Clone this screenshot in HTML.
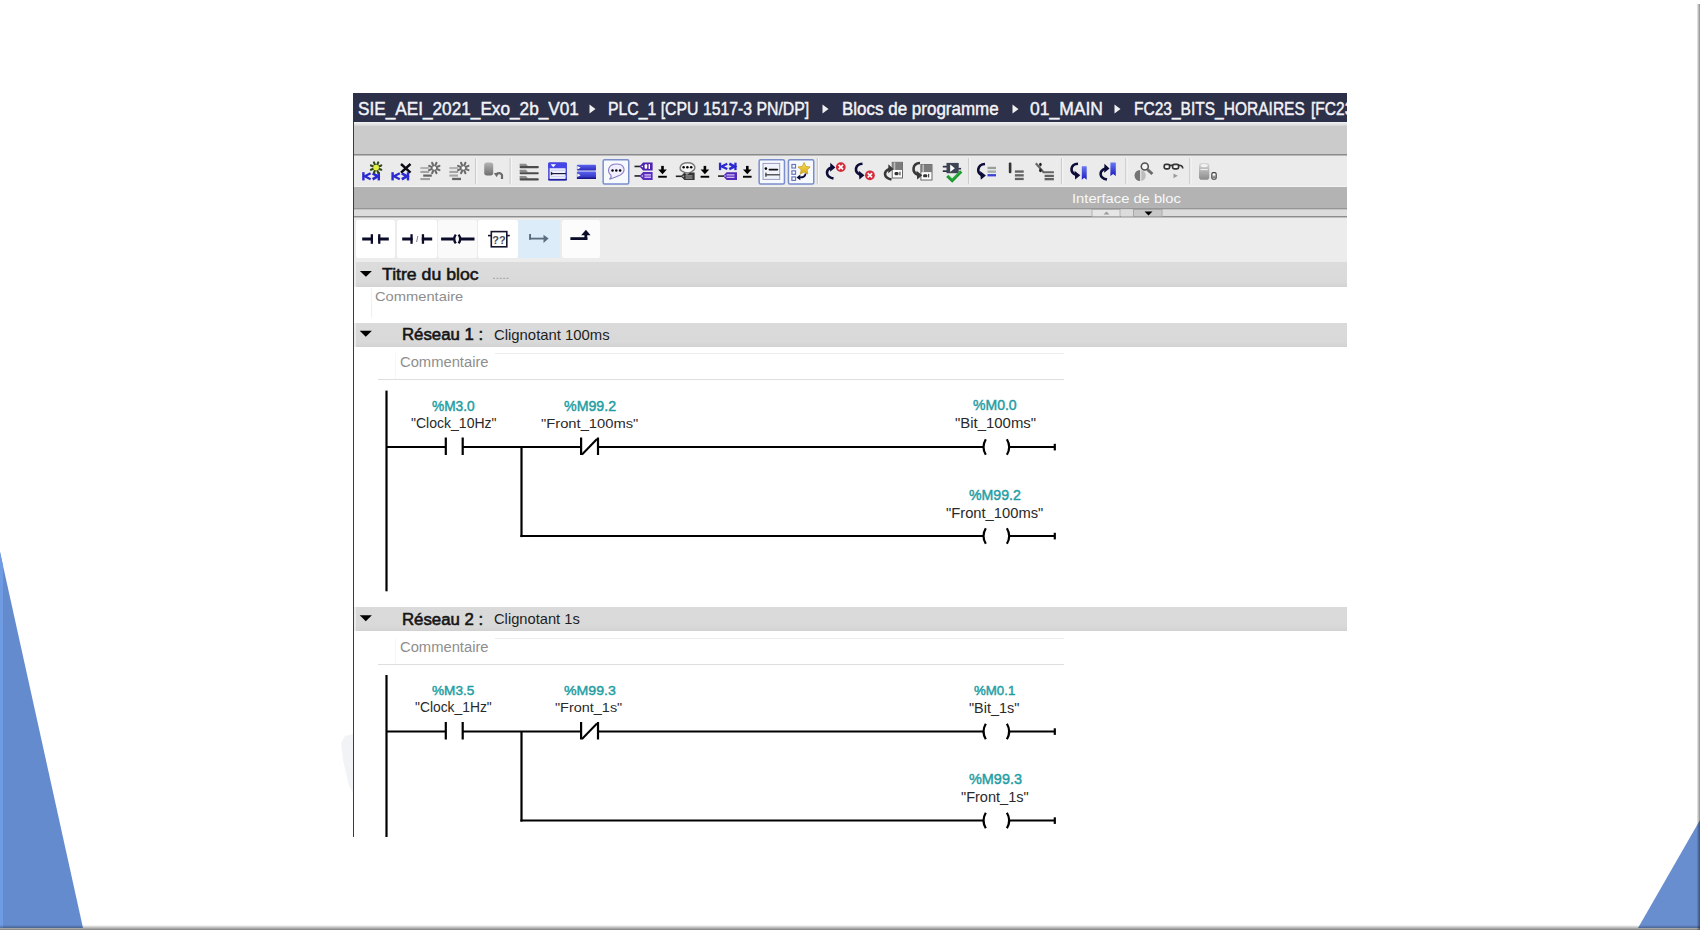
<!DOCTYPE html>
<html><head><meta charset="utf-8"><style>
html,body{margin:0;padding:0;width:1700px;height:930px;overflow:hidden;background:#fff;}
.abs{position:absolute;}
.t{position:absolute;white-space:nowrap;line-height:1;transform-origin:0 0;font-family:"Liberation Sans",sans-serif;}
</style></head><body>
<svg class="abs" style="left:0;top:0" width="1700" height="930" viewBox="0 0 1700 930">
<polygon points="0,552 83,928 0,928" fill="#648bce"/>
<polygon points="0,552 3,565.6 3,928 0,928" fill="#6f9be2"/>
<polygon points="1700,820 1638,928 1700,928" fill="#688ed0"/>
<defs>
<linearGradient id="rs" x1="0" x2="1" y1="0" y2="0"><stop offset="0" stop-color="#000" stop-opacity="0"/><stop offset="1" stop-color="#000" stop-opacity="0.45"/></linearGradient>
<linearGradient id="bs" x1="0" x2="0" y1="0" y2="1"><stop offset="0" stop-color="#000" stop-opacity="0"/><stop offset="1" stop-color="#000" stop-opacity="0.5"/></linearGradient>
</defs>
<rect x="1696.5" y="4" width="3.5" height="926" fill="url(#rs)"/>
<rect x="0" y="925" width="1700" height="5" fill="url(#bs)"/>
</svg>
<div class="abs" style="left:353px;top:93px;width:994px;height:29px;background:#2c3049;"></div>
<div class="abs" style="left:353px;top:122px;width:994px;height:4px;background:linear-gradient(#f4f4f4,#d4d4d4);"></div>
<div class="abs" style="left:353px;top:126px;width:994px;height:28px;background:#cbcbcb;"></div>
<div class="abs" style="left:353px;top:154px;width:994px;height:1px;background:#8a8a8a;"></div>
<div class="abs" style="left:353px;top:155px;width:994px;height:1px;background:#b8b8b8;"></div>
<div class="abs" style="left:353px;top:156px;width:994px;height:30px;background:#ebebeb;"></div>
<div class="abs" style="left:353px;top:186px;width:994px;height:1px;background:#f3f3f3;"></div>
<div class="abs" style="left:353px;top:187px;width:994px;height:21px;background:#b3b3b3;"></div>
<div class="abs" style="left:353px;top:208px;width:994px;height:1px;background:#959595;"></div>
<div class="abs" style="left:353px;top:209px;width:994px;height:1px;background:#c4c4c4;"></div>
<div class="abs" style="left:353px;top:210px;width:994px;height:6px;background:#dcdcdc;"></div>
<div class="abs" style="left:353px;top:216px;width:994px;height:1px;background:#8d8d8d;"></div>
<div class="abs" style="left:353px;top:217px;width:994px;height:1px;background:#c0c0c0;"></div>
<div class="abs" style="left:353px;top:218px;width:994px;height:44px;background:#ececec;"></div>
<div class="abs" style="left:353px;top:262px;width:994px;height:25px;background:linear-gradient(#dcdcdc,#dadada 80%,#d3d3d3);"></div>
<div class="abs" style="left:353px;top:322.5px;width:994px;height:24px;background:linear-gradient(#dadada,#d9d9d9 80%,#d2d2d2);"></div>
<div class="abs" style="left:353px;top:607px;width:994px;height:24px;background:linear-gradient(#dadada,#d9d9d9 80%,#d2d2d2);"></div>
<div class="abs" style="left:354.3px;top:262px;width:1.8px;height:25px;background:#ebebeb;"></div>
<div class="abs" style="left:354.3px;top:322.5px;width:1.8px;height:24px;background:#ebebeb;"></div>
<div class="abs" style="left:354.3px;top:607px;width:1.8px;height:24px;background:#ebebeb;"></div>
<div class="abs" style="left:353px;top:122px;width:1.3px;height:715px;background:#3c3c3c;"></div>
<div class="abs" style="left:353px;top:93px;width:994px;height:29px;overflow:hidden">
<div class="abs" style="left:-353px;top:-93px;width:1700px;height:200px">
<div class="t" style="left:358.00px;top:100.00px;font-size:18.60px;color:#f4f4f8;font-weight:400;transform:scaleX(0.9248);-webkit-text-stroke:0.45px #f4f4f8;">SIE_AEI_2021_Exo_2b_V01</div>
<div class="t" style="left:608.40px;top:100.00px;font-size:18.60px;color:#f4f4f8;font-weight:400;transform:scaleX(0.8501);-webkit-text-stroke:0.45px #f4f4f8;">PLC_1 [CPU 1517-3 PN/DP]</div>
<div class="t" style="left:841.90px;top:100.00px;font-size:18.60px;color:#f4f4f8;font-weight:400;transform:scaleX(0.9133);-webkit-text-stroke:0.45px #f4f4f8;">Blocs de programme</div>
<div class="t" style="left:1030.00px;top:100.00px;font-size:18.60px;color:#f4f4f8;font-weight:400;transform:scaleX(0.9415);-webkit-text-stroke:0.45px #f4f4f8;">01_MAIN</div>
<div class="t" style="left:1133.60px;top:100.00px;font-size:18.60px;color:#f4f4f8;font-weight:400;transform:scaleX(0.8349);-webkit-text-stroke:0.45px #f4f4f8;">FC23_BITS_HORAIRES</div>
<div class="t" style="left:1311.00px;top:100.00px;font-size:18.60px;color:#f4f4f8;font-weight:400;transform:scaleX(0.8349);-webkit-text-stroke:0.45px #f4f4f8;">[FC23]</div>
</div></div>
<svg class="abs" style="left:589px;top:102px" width="8" height="14"><polygon points="0.5,2.5 6.5,7 0.5,11.5" fill="#f0f0f0"/></svg>
<svg class="abs" style="left:822px;top:102px" width="8" height="14"><polygon points="0.5,2.5 6.5,7 0.5,11.5" fill="#f0f0f0"/></svg>
<svg class="abs" style="left:1012px;top:102px" width="8" height="14"><polygon points="0.5,2.5 6.5,7 0.5,11.5" fill="#f0f0f0"/></svg>
<svg class="abs" style="left:1114px;top:102px" width="8" height="14"><polygon points="0.5,2.5 6.5,7 0.5,11.5" fill="#f0f0f0"/></svg>
<div class="t" style="left:1072.00px;top:192.00px;font-size:13.66px;color:#f8f8f8;font-weight:400;transform:scaleX(1.0788);">Interface de bloc</div>
<div class="t" style="left:382.40px;top:267.00px;font-size:16.72px;color:#151515;font-weight:400;transform:scaleX(1.0575);-webkit-text-stroke:0.55px #151515;">Titre du bloc</div>
<div class="t" style="left:375.30px;top:290.00px;font-size:13.37px;color:#8e8e8e;font-weight:400;transform:scaleX(1.1001);">Commentaire</div>
<div class="t" style="left:401.50px;top:327.00px;font-size:16.86px;color:#151515;font-weight:400;transform:scaleX(0.9955);-webkit-text-stroke:0.6px #151515;">Réseau 1 :</div>
<div class="t" style="left:494.20px;top:328.00px;font-size:14.54px;color:#1e1e1e;font-weight:400;transform:scaleX(1.0228);">Clignotant 100ms</div>
<div class="t" style="left:399.50px;top:356.00px;font-size:13.81px;color:#8e8e8e;font-weight:400;transform:scaleX(1.0690);">Commentaire</div>
<div class="abs" style="left:378px;top:379px;width:686px;height:1.2px;background:#dedede;"></div>
<div class="abs" style="left:495px;top:353px;width:569px;height:1px;background:#ececec;"></div>
<div class="abs" style="left:395px;top:353px;width:1px;height:26px;background:#f7f7f7;"></div>
<div class="abs" style="left:378px;top:663.5px;width:686px;height:1.2px;background:#dedede;"></div>
<div class="abs" style="left:495px;top:637.5px;width:569px;height:1px;background:#ececec;"></div>
<div class="abs" style="left:395px;top:637.5px;width:1px;height:26px;background:#f7f7f7;"></div>
<div class="abs" style="left:371px;top:288px;width:1px;height:30px;background:#f0f0f0;"></div>
<div class="t" style="left:401.50px;top:612.00px;font-size:16.86px;color:#151515;font-weight:400;transform:scaleX(0.9955);-webkit-text-stroke:0.6px #151515;">Réseau 2 :</div>
<div class="t" style="left:494.20px;top:612.00px;font-size:14.54px;color:#1e1e1e;font-weight:400;transform:scaleX(1.0112);">Clignotant 1s</div>
<div class="t" style="left:399.50px;top:641.00px;font-size:13.81px;color:#8e8e8e;font-weight:400;transform:scaleX(1.0690);">Commentaire</div>
<div class="t" style="left:432.00px;top:399.00px;font-size:14.54px;color:#1f9ea3;font-weight:400;transform:scaleX(0.9438);-webkit-text-stroke:0.45px #1f9ea3;">%M3.0</div>
<div class="t" style="left:410.90px;top:416.00px;font-size:14.97px;color:#2a2a2a;font-weight:400;transform:scaleX(0.9369);">"Clock_10Hz"</div>
<div class="t" style="left:563.50px;top:399.00px;font-size:14.10px;color:#1f9ea3;font-weight:400;transform:scaleX(1.0076);-webkit-text-stroke:0.45px #1f9ea3;">%M99.2</div>
<div class="t" style="left:540.50px;top:417.00px;font-size:13.66px;color:#2a2a2a;font-weight:400;transform:scaleX(1.0797);">"Front_100ms"</div>
<div class="t" style="left:972.50px;top:399.00px;font-size:13.95px;color:#1f9ea3;font-weight:400;transform:scaleX(1.0062);-webkit-text-stroke:0.45px #1f9ea3;">%M0.0</div>
<div class="t" style="left:954.50px;top:416.00px;font-size:14.83px;color:#2a2a2a;font-weight:400;transform:scaleX(1.0065);">"Bit_100ms"</div>
<div class="t" style="left:969.30px;top:488.00px;font-size:14.83px;color:#1f9ea3;font-weight:400;transform:scaleX(0.9545);-webkit-text-stroke:0.45px #1f9ea3;">%M99.2</div>
<div class="t" style="left:946.40px;top:506.00px;font-size:14.97px;color:#2a2a2a;font-weight:400;transform:scaleX(0.9843);">"Front_100ms"</div>
<div class="t" style="left:432.40px;top:684.00px;font-size:13.23px;color:#1f9ea3;font-weight:400;transform:scaleX(1.0275);-webkit-text-stroke:0.45px #1f9ea3;">%M3.5</div>
<div class="t" style="left:414.70px;top:701.00px;font-size:13.81px;color:#2a2a2a;font-weight:400;transform:scaleX(1.0030);">"Clock_1Hz"</div>
<div class="t" style="left:563.50px;top:684.00px;font-size:13.66px;color:#1f9ea3;font-weight:400;transform:scaleX(1.0337);-webkit-text-stroke:0.45px #1f9ea3;">%M99.3</div>
<div class="t" style="left:554.70px;top:701.00px;font-size:13.37px;color:#2a2a2a;font-weight:400;transform:scaleX(1.0806);">"Front_1s"</div>
<div class="t" style="left:973.90px;top:684.00px;font-size:13.37px;color:#1f9ea3;font-weight:400;transform:scaleX(0.9923);-webkit-text-stroke:0.45px #1f9ea3;">%M0.1</div>
<div class="t" style="left:969.30px;top:701.00px;font-size:14.39px;color:#2a2a2a;font-weight:400;transform:scaleX(1.0036);">"Bit_1s"</div>
<div class="t" style="left:968.90px;top:772.00px;font-size:14.39px;color:#1f9ea3;font-weight:400;transform:scaleX(1.0043);-webkit-text-stroke:0.45px #1f9ea3;">%M99.3</div>
<div class="t" style="left:960.50px;top:791.00px;font-size:13.81px;color:#2a2a2a;font-weight:400;transform:scaleX(1.0527);">"Front_1s"</div>
<svg class="abs" style="left:0;top:0" width="1700" height="930" stroke="#000" stroke-width="2.2" stroke-linecap="butt"><line x1="386.5" y1="390.6" x2="386.5" y2="591.3"/><line x1="386.5" y1="447" x2="445.8" y2="447"/><line x1="445.8" y1="437.5" x2="445.8" y2="455"/><line x1="462.7" y1="437.5" x2="462.7" y2="455"/><line x1="462.7" y1="447" x2="581.1" y2="447"/><line x1="581.1" y1="437.5" x2="581.1" y2="455"/><line x1="598" y1="437.5" x2="598" y2="455"/><line x1="582" y1="454.5" x2="597" y2="439" stroke-width="2"/><line x1="598" y1="447" x2="983" y2="447"/><line x1="521.5" y1="447" x2="521.5" y2="537.1"/><line x1="520.4" y1="536" x2="983" y2="536"/><path d="M985.8,439.2 Q981.2,447 985.8,454.8" fill="none"/><path d="M1006.9,439.2 Q1011.5,447 1006.9,454.8" fill="none"/><line x1="1009.5" y1="447" x2="1055" y2="447"/><line x1="1054.8" y1="443.8" x2="1054.8" y2="450.4"/><path d="M985.8,528.2 Q981.2,536 985.8,543.8" fill="none"/><path d="M1006.9,528.2 Q1011.5,536 1006.9,543.8" fill="none"/><line x1="1009.5" y1="536" x2="1055" y2="536"/><line x1="1054.8" y1="532.8" x2="1054.8" y2="539.4"/><line x1="386.5" y1="675" x2="386.5" y2="837"/><line x1="386.5" y1="731.5" x2="445.8" y2="731.5"/><line x1="445.8" y1="722.0" x2="445.8" y2="739.5"/><line x1="462.7" y1="722.0" x2="462.7" y2="739.5"/><line x1="462.7" y1="731.5" x2="581.1" y2="731.5"/><line x1="581.1" y1="722.0" x2="581.1" y2="739.5"/><line x1="598" y1="722.0" x2="598" y2="739.5"/><line x1="582" y1="739.0" x2="597" y2="723.5" stroke-width="2"/><line x1="598" y1="731.5" x2="983" y2="731.5"/><line x1="521.5" y1="731.5" x2="521.5" y2="821.6"/><line x1="520.4" y1="820.5" x2="983" y2="820.5"/><path d="M985.8,723.7 Q981.2,731.5 985.8,739.3" fill="none"/><path d="M1006.9,723.7 Q1011.5,731.5 1006.9,739.3" fill="none"/><line x1="1009.5" y1="731.5" x2="1055" y2="731.5"/><line x1="1054.8" y1="728.3" x2="1054.8" y2="734.9"/><path d="M985.8,812.7 Q981.2,820.5 985.8,828.3" fill="none"/><path d="M1006.9,812.7 Q1011.5,820.5 1006.9,828.3" fill="none"/><line x1="1009.5" y1="820.5" x2="1055" y2="820.5"/><line x1="1054.8" y1="817.3" x2="1054.8" y2="823.9"/></svg>
<svg class="abs" style="left:0;top:0" width="1700" height="930"><polygon points="359.9,270.9 371.9,270.9 365.9,276.8" fill="#000"/><polygon points="359.7,330.8 371.9,330.8 365.8,336.8" fill="#000"/><polygon points="359.7,615.3 371.9,615.3 365.8,621.3" fill="#000"/></svg>
<div class="abs" style="left:356.2px;top:220px;width:38.9px;height:37.5px;background:#ffffff;border-radius:2px;"></div>
<div class="abs" style="left:397px;top:220px;width:39.7px;height:37.5px;background:#ffffff;border-radius:2px;"></div>
<div class="abs" style="left:438.1px;top:220px;width:38.6px;height:37.5px;background:#fafafa;border-radius:2px;"></div>
<div class="abs" style="left:477.9px;top:220px;width:39.8px;height:37.5px;background:#ffffff;border-radius:2px;"></div>
<div class="abs" style="left:518.4px;top:220px;width:42.1px;height:37.5px;background:#dcecf8;border-radius:2px;"></div>
<div class="abs" style="left:562px;top:220px;width:38.2px;height:37.5px;background:#fcfcfc;border-radius:2px;"></div>
<svg class="abs" style="left:0;top:0" width="1700" height="930">
<g fill="#0b0b2a">
<rect x="362.2" y="237.5" width="10.3" height="3"/><rect x="370.7" y="234.2" width="2.3" height="9.6"/>
<rect x="378.1" y="234.2" width="2.3" height="9.6"/><rect x="378.1" y="237.5" width="10.7" height="3"/>
<rect x="402.2" y="237.5" width="10.4" height="3"/><rect x="410.4" y="234.2" width="2.3" height="9.6"/>
<rect x="421.8" y="234.2" width="2.3" height="9.6"/><rect x="421.8" y="237.5" width="10.4" height="3"/>
<rect x="441.1" y="237.5" width="12.5" height="3"/><rect x="461" y="237.5" width="13.5" height="3"/>
</g>
<line x1="417.8" y1="236" x2="416.6" y2="242" stroke="#8a86a8" stroke-width="1.1"/>
<path d="M455.8,234.6 Q452.6,239 455.8,243.4" fill="none" stroke="#0b0b2a" stroke-width="2.3"/>
<path d="M458.6,234.6 Q461.8,239 458.6,243.4" fill="none" stroke="#0b0b2a" stroke-width="2.3"/>
<rect x="491.3" y="231.6" width="15.5" height="15.2" fill="#fff" stroke="#15152e" stroke-width="1.6"/>
<rect x="488" y="234.8" width="3" height="1.6" fill="#15152e"/><rect x="506.8" y="234.8" width="3" height="1.6" fill="#15152e"/>
<text x="499" y="243.6" font-family="Liberation Sans" font-weight="700" font-size="11" fill="#4a4a58" text-anchor="middle">??</text>
<g fill="#5b6e80"><rect x="529.1" y="234" width="1.9" height="5.7"/><rect x="529.1" y="237.7" width="15" height="1.8"/>
<polygon points="543.5,234.7 548.6,238.6 543.5,243.1"/></g>
<g fill="#0b0b2a"><rect x="570.4" y="237.2" width="17" height="2.8"/><rect x="584.4" y="233.5" width="2.8" height="6.5"/>
<polygon points="581.2,235.2 590.6,235.2 585.9,229.8"/></g>
</svg>
<svg class="abs" style="left:0;top:0" width="1700" height="930"><defs>
<linearGradient id="cyl" x1="0" x2="0" y1="0" y2="1"><stop offset="0" stop-color="#b4b4b4"/><stop offset="1" stop-color="#6e6e6e"/></linearGradient>
<linearGradient id="cyl2" x1="0" x2="0" y1="0" y2="1"><stop offset="0" stop-color="#d8d8d8"/><stop offset="1" stop-color="#8c8c8c"/></linearGradient>
<linearGradient id="bmg" x1="0" x2="0" y1="0" y2="1"><stop offset="0" stop-color="#6a78f4"/><stop offset="1" stop-color="#1c1cc0"/></linearGradient>
<linearGradient id="blb" x1="0" x2="0" y1="0" y2="1"><stop offset="0" stop-color="#5a62f0"/><stop offset="1" stop-color="#2a2ab8"/></linearGradient>
<linearGradient id="star" x1="0" x2="0" y1="0" y2="1"><stop offset="0" stop-color="#f8e060"/><stop offset="1" stop-color="#d8a818"/></linearGradient>
</defs><g fill="#2a2ad0"><rect x="362.2" y="172.2" width="2.4" height="8.200000000000017"/><rect x="377.6" y="172.2" width="2.4" height="8.200000000000017"/></g><polyline points="370.6,173.34799999999998 364.8,176.3 370.6,179.252" fill="none" stroke="#2a2ad0" stroke-width="2.2"/><polyline points="372.6,173.34799999999998 377.8,176.3 372.6,179.252" fill="none" stroke="#2a2ad0" stroke-width="2.6"/><g stroke="#2f4a18" stroke-width="2.1" stroke-linecap="round"><line x1="378.13" y1="168.44" x2="381.27" y2="169.74"/><line x1="376.94" y1="169.63" x2="378.24" y2="172.77"/><line x1="375.26" y1="169.63" x2="373.96" y2="172.77"/><line x1="374.07" y1="168.44" x2="370.93" y2="169.74"/><line x1="374.07" y1="166.76" x2="370.93" y2="165.46"/><line x1="375.26" y1="165.57" x2="373.96" y2="162.43"/><line x1="376.94" y1="165.57" x2="378.24" y2="162.43"/><line x1="378.13" y1="166.76" x2="381.27" y2="165.46"/></g><circle cx="376.1" cy="167.6" r="2.9" fill="#e4f040"/><g fill="#2a2ad0"><rect x="391.4" y="172.2" width="2.4" height="8.200000000000017"/><rect x="406.8" y="172.2" width="2.4" height="8.200000000000017"/></g><polyline points="399.8,173.34799999999998 394.0,176.3 399.8,179.252" fill="none" stroke="#2a2ad0" stroke-width="2.2"/><polyline points="401.8,173.34799999999998 407.0,176.3 401.8,179.252" fill="none" stroke="#2a2ad0" stroke-width="2.6"/><g stroke="#0a0a14" stroke-width="2.4"><line x1="401" y1="164" x2="410.5" y2="172.6"/><line x1="410.5" y1="164" x2="401" y2="172.6"/></g><rect x="420.4" y="167" width="8.8" height="2.1" fill="#b4b4b4"/><rect x="420.4" y="170.9" width="8.8" height="2.1" fill="#a4a4a4"/><rect x="423.2" y="174.5" width="8.6" height="2.2" fill="#666"/><rect x="420.4" y="178" width="9.6" height="2.1" fill="#a0a0a0"/><g stroke="#6a6a6a" stroke-width="2.1" stroke-linecap="round"><line x1="436.33" y1="168.84" x2="439.47" y2="170.14"/><line x1="435.14" y1="170.03" x2="436.44" y2="173.17"/><line x1="433.46" y1="170.03" x2="432.16" y2="173.17"/><line x1="432.27" y1="168.84" x2="429.13" y2="170.14"/><line x1="432.27" y1="167.16" x2="429.13" y2="165.86"/><line x1="433.46" y1="165.97" x2="432.16" y2="162.83"/><line x1="435.14" y1="165.97" x2="436.44" y2="162.83"/><line x1="436.33" y1="167.16" x2="439.47" y2="165.86"/></g><circle cx="434.3" cy="168" r="1.8" fill="#fafafa"/><rect x="449.4" y="167" width="8.8" height="2.1" fill="#b4b4b4"/><rect x="449.4" y="170.9" width="8.8" height="2.1" fill="#a4a4a4"/><rect x="449.4" y="174.5" width="8.6" height="2.1" fill="#a4a4a4"/><rect x="452.09999999999997" y="177.8" width="8.9" height="2.3" fill="#646464"/><g stroke="#6a6a6a" stroke-width="2.1" stroke-linecap="round"><line x1="465.27" y1="168.84" x2="468.42" y2="170.14"/><line x1="464.08" y1="170.03" x2="465.39" y2="173.17"/><line x1="462.40" y1="170.03" x2="461.10" y2="173.17"/><line x1="461.21" y1="168.84" x2="458.07" y2="170.14"/><line x1="461.21" y1="167.16" x2="458.07" y2="165.86"/><line x1="462.40" y1="165.97" x2="461.10" y2="162.83"/><line x1="464.08" y1="165.97" x2="465.39" y2="162.83"/><line x1="465.27" y1="167.16" x2="468.42" y2="165.86"/></g><circle cx="463.3" cy="168" r="1.8" fill="#fafafa"/><rect x="474.9" y="158" width="1.3" height="26" fill="#cdcdcd"/><rect x="476.2" y="158" width="1" height="26" fill="#f7f7f7"/><rect x="484.2" y="162.5" width="9" height="12.9" rx="2.6" fill="url(#cyl)"/><path d="M496,174.5 Q500,171.5 502,175 L502,179" fill="none" stroke="#6a6a6a" stroke-width="2.2"/><polygon points="493.8,173.2 498.8,172.4 496.8,177.2" fill="#6a6a6a"/><rect x="509.5" y="158" width="1.3" height="26" fill="#cdcdcd"/><rect x="510.8" y="158" width="1" height="26" fill="#f7f7f7"/><polygon points="519.6,163.8 526,163.8 528,166.3 519.6,166.3" fill="#8c8c8c"/><rect x="519.6" y="166.10000000000002" width="19.2" height="2.2" rx="1" fill="#4c4c4c"/><polygon points="519.6,169.85000000000002 526,169.85000000000002 528,172.35000000000002 519.6,172.35000000000002" fill="#8c8c8c"/><rect x="519.6" y="172.15000000000003" width="19.2" height="2.2" rx="1" fill="#4c4c4c"/><polygon points="519.6,175.9 526,175.9 528,178.4 519.6,178.4" fill="#8c8c8c"/><rect x="519.6" y="178.20000000000002" width="19.2" height="2.2" rx="1" fill="#4c4c4c"/><rect x="548.9" y="163.1" width="17.3" height="16.6" rx="1" fill="#eef0ff" stroke="#3a3ad0" stroke-width="1.4"/><rect x="548.2" y="162.4" width="18.7" height="5.8" rx="1" fill="#4646e6"/><polygon points="550.6,164.3 556,164.3 553.3,167.2" fill="#fff"/><rect x="551" y="169.8" width="15" height="0.9" fill="#c8ccf0"/><rect x="551" y="176.2" width="15" height="0.9" fill="#c8ccf0"/><rect x="551.5" y="173" width="14.5" height="1.2" fill="#1c1c40"/><polygon points="550.8,171.6 550.8,175.6 553.5,173.6" fill="#1c1c40"/><rect x="548.2" y="178.9" width="18.7" height="1.5" fill="#20209a"/><rect x="576.9" y="164.8" width="19.1" height="5.8" rx="0.8" fill="url(#blb)"/><rect x="576.9" y="171.6" width="19.1" height="7.4" rx="0.8" fill="url(#blb)"/><rect x="576.9" y="177.6" width="19.1" height="1.4" fill="#1a1a80"/><polygon points="577.3,166.1 577.3,169.5 580.6,167.8" fill="#fff"/><polygon points="577.3,173.4 577.3,177 580.6,175.2" fill="#fff"/><rect x="603.15" y="159.85" width="25.600000000000023" height="24.1" rx="1.5" fill="#f6faff" stroke="#7b8dcb" stroke-width="1.5"/><path d="M610.8,175.2 C606.5,171 608.5,164 616.5,164 C624.5,164 626,170.5 621.5,174.2 C619,176.2 614.5,177.5 609.5,179.2 C611,177.8 611.5,176.3 610.8,175.2 Z" fill="#f1efff" stroke="#8a7cc4" stroke-width="1.1"/><g fill="#000"><circle cx="612.5" cy="170.6" r="1.25"/><circle cx="616.3" cy="170.6" r="1.25"/><circle cx="620.1" cy="170.6" r="1.25"/></g><line x1="634.5" y1="166.45" x2="640.5" y2="166.45" stroke="#222" stroke-width="1.6"/><polygon points="639.5,166.45 643.1,162.4 652.6,162.4 652.6,170.5 643.1,170.5" fill="#4f22b0"/><g fill="#fff"><rect x="644.6" y="164.3" width="2.6" height="4.4" rx="1"/><rect x="648.6" y="164.1" width="1.4" height="4.8"/><circle cx="642.3" cy="166.5" r="0.8"/></g><line x1="634.5" y1="175.95" x2="640.5" y2="175.95" stroke="#222" stroke-width="1.6"/><polygon points="639.5,175.95 643.1,171.9 652.6,171.9 652.6,180 643.1,180" fill="#5a2cc0"/><g fill="#e8d8ff"><rect x="644.4" y="174.3" width="6.6" height="1.2"/><rect x="644.4" y="176.6" width="6.6" height="1.2"/><circle cx="642.3" cy="176" r="0.8"/></g><g fill="#000"><rect x="661.2" y="165.9" width="2.6" height="4.3"/><polygon points="658.2,169.6 666.8000000000001,169.6 662.5,174.2"/><rect x="658.2" y="175.8" width="8.6" height="1.9"/></g><path d="M682.5,171.5 C678.5,169 679.5,162.7 687.8,162.7 C695.5,162.7 696.5,169 692.5,171 L688,174 Z" fill="#f6f6f6" stroke="#7a7a7a" stroke-width="1.4"/><g fill="#000"><circle cx="683.6" cy="167.3" r="1.25"/><circle cx="687.4" cy="167.3" r="1.25"/><circle cx="691.2" cy="167.3" r="1.25"/></g><line x1="675.8" y1="176.3" x2="681.8" y2="176.3" stroke="#222" stroke-width="1.6"/><polygon points="680.8,176.3 684.4,172.6 694.6,172.6 694.6,180 684.4,180" fill="#353535"/><polygon points="684,172.6 690,172.6 687,175" fill="#9a9a9a"/><g fill="#9a9a9a"><rect x="685.5" y="175.3" width="7" height="1.3"/><rect x="685.5" y="177.4" width="7" height="1.3"/><circle cx="683.3" cy="176.3" r="0.9"/></g><g fill="#000"><rect x="703.6" y="165.9" width="2.6" height="4.3"/><polygon points="700.6,169.6 709.2,169.6 704.9,174.2"/><rect x="700.6" y="175.8" width="8.6" height="1.9"/></g><g fill="#2a2ad0"><rect x="718.9" y="162.7" width="2.3" height="7.400000000000006"/><rect x="734.3" y="162.7" width="2.3" height="7.400000000000006"/></g><polyline points="727.3,163.736 721.5,166.39999999999998 727.3,169.064" fill="none" stroke="#2a2ad0" stroke-width="2.2"/><polyline points="729.3,163.736 734.5,166.39999999999998 729.3,169.064" fill="none" stroke="#2a2ad0" stroke-width="2.6"/><line x1="718" y1="176.1" x2="724" y2="176.1" stroke="#222" stroke-width="1.6"/><polygon points="723,176.1 726.6,172.2 737,172.2 737,180 726.6,180" fill="#5428b8"/><g fill="#d8c8ff"><rect x="726.5" y="174.3" width="8" height="1.2"/><rect x="726.5" y="176.7" width="8" height="1.2"/><circle cx="725" cy="176" r="0.8"/></g><g fill="#000"><rect x="746" y="165.9" width="2.6" height="4.3"/><polygon points="743,169.6 751.6,169.6 747.3,174.2"/><rect x="743" y="175.8" width="8.6" height="1.9"/></g><rect x="759.15" y="159.85" width="25.300000000000068" height="24.1" rx="1.5" fill="#f6faff" stroke="#7b8dcb" stroke-width="1.5"/><rect x="763" y="163.4" width="16.7" height="16" fill="#f1f3fc" stroke="#9c9cc0" stroke-width="1"/><circle cx="765.9" cy="168.6" r="1.3" fill="#000"/><rect x="768.6" y="168.8" width="9.6" height="1.7" rx="0.8" fill="#111"/><rect x="765.4" y="172.6" width="1.1" height="4.2" fill="#222"/><rect x="765.6" y="174.2" width="14.2" height="1.2" fill="#333"/><rect x="788.45" y="159.85" width="25.299999999999955" height="24.1" rx="1.5" fill="#f6faff" stroke="#7b8dcb" stroke-width="1.5"/><g fill="#fff" stroke="#6878b8" stroke-width="1.2"><rect x="791.9" y="164.5" width="3.6" height="3.5"/><rect x="791.9" y="170.8" width="3.6" height="3.5"/><rect x="791.9" y="176.9" width="3.6" height="3.5"/></g><polygon points="804.10,162.50 805.92,166.39 810.19,166.92 807.05,169.86 807.86,174.08 804.10,172.00 800.34,174.08 801.15,169.86 798.01,166.92 802.28,166.39" fill="url(#star)" stroke="#c09a10" stroke-width="0.7" stroke-linejoin="round"/><path d="M805.5,173.5 C805.5,176.5 803,177.6 799.5,177.4" fill="none" stroke="#0c0c38" stroke-width="1.8"/><polygon points="796.5,177.4 800.3,174.6 800.3,180.2" fill="#0c0c38"/><rect x="816.6999999999999" y="158" width="1.3" height="26" fill="#cdcdcd"/><rect x="818.0" y="158" width="1" height="26" fill="#f7f7f7"/><path d="M833.5,178.5 C825.5,177.0 825.0,170.0 831.4,167.5" fill="none" stroke="#0c0c38" stroke-width="2.6"/><polygon points="830.3,162.7 835.4,167.5 830.1,171.8" fill="#0c0c38"/><circle cx="840.8" cy="167.1" r="4.9" fill="#d52a3a"/><g stroke="#fff" stroke-width="1.7"><line x1="838.5999999999999" y1="164.9" x2="843.0" y2="169.29999999999998"/><line x1="843.0" y1="164.9" x2="838.5999999999999" y2="169.29999999999998"/></g><path d="M862.5,163.8 C854.5,164.3 854.0,172.3 860.2,174.8" fill="none" stroke="#0c0c38" stroke-width="2.6"/><polygon points="858.7,170.8 864.5,175.3 859.4000000000001,179.5" fill="#0c0c38"/><circle cx="869.9" cy="175.3" r="4.9" fill="#d52a3a"/><g stroke="#fff" stroke-width="1.7"><line x1="867.6999999999999" y1="173.10000000000002" x2="872.1" y2="177.5"/><line x1="872.1" y1="173.10000000000002" x2="867.6999999999999" y2="177.5"/></g><rect x="892.2" y="162.3" width="10.3" height="15.7" fill="#fff" stroke="#5a5a5a" stroke-width="0.9"/><rect x="892.2" y="162.3" width="10.3" height="7.693" fill="#7c7c7c"/><rect x="893.7" y="162.3" width="1.6" height="7.693" fill="#bdbdbd"/><rect x="894.5" y="172.03400000000002" width="4" height="3.2" rx="1.2" fill="#333"/><rect x="899.4000000000001" y="171.72" width="1.1" height="3.6" fill="#333"/><path d="M891.5,179.5 C883.5,178.0 883.0,171.5 889.5,169" fill="none" stroke="#383838" stroke-width="2.6"/><polygon points="888.4,164.2 893.5,169 888.2,173.3" fill="#383838"/><rect x="920.9" y="164.6" width="11.1" height="15.4" fill="#fff" stroke="#5a5a5a" stroke-width="0.9"/><rect x="920.9" y="164.6" width="11.1" height="7.546" fill="#7c7c7c"/><rect x="922.4" y="164.6" width="1.6" height="7.546" fill="#bdbdbd"/><rect x="923.1999999999999" y="174.148" width="4" height="3.2" rx="1.2" fill="#333"/><rect x="928.1" y="173.84" width="1.1" height="3.6" fill="#333"/><path d="M920,163 C912,163.5 911.5,172.3 918,174.8" fill="none" stroke="#383838" stroke-width="2.6"/><polygon points="916.5,170.8 922.3,175.3 917.2,179.5" fill="#383838"/><g fill="#2e3240"><rect x="942.8" y="165.8" width="5" height="1.7"/><rect x="942.8" y="170.3" width="5" height="1.7"/><rect x="957.5" y="167.9" width="3.6" height="1.6"/></g><rect x="946.5" y="162.9" width="12.2" height="10.3" fill="#3e4454"/><polygon points="950.2,164.6 950.2,172 954.8,168.3" fill="#fff"/><polyline points="947.3,175.8 952.2,180.6 961.2,171.4" fill="none" stroke="#1d9a2e" stroke-width="3.2"/><polyline points="948,175.3 952.2,179.4 960,171.6" fill="none" stroke="#58d068" stroke-width="0.8" opacity="0.7"/><rect x="968.0" y="158" width="1.3" height="26" fill="#cdcdcd"/><rect x="969.3000000000001" y="158" width="1" height="26" fill="#f7f7f7"/><path d="M985,164 C977,164.5 976.5,172.5 981.6,175.0" fill="none" stroke="#0c0c38" stroke-width="2.6"/><polygon points="980.1,171.0 985.9,175.5 980.8000000000001,179.7" fill="#0c0c38"/><rect x="987.5" y="166.8" width="8.5" height="2.3" fill="#98a098"/><rect x="987.5" y="170.5" width="8.5" height="2.3" fill="#a4aea8"/><rect x="987.5" y="174.1" width="8.5" height="2.3" fill="#3a42d8"/><rect x="1008.8" y="162.5" width="2.6" height="10.7" rx="1" fill="#333"/><g fill="#626262"><rect x="1014.9" y="170.4" width="8.8" height="2.3"/><rect x="1014.9" y="174.2" width="8.8" height="2.3"/><rect x="1014.9" y="177.8" width="8.8" height="2.3"/></g><path d="M1035.8,163.3 L1043.5,172.2 L1053.9,172.2" fill="none" stroke="#666" stroke-width="2.1"/><ellipse cx="1040.4" cy="164.6" rx="1.3" ry="1.8" fill="#222"/><ellipse cx="1040.4" cy="170.4" rx="1.3" ry="1.8" fill="#222"/><g fill="#626262"><rect x="1044.6" y="174.8" width="9.3" height="2.3"/><rect x="1044.6" y="178" width="9.3" height="2.3"/></g><rect x="1060.9" y="158" width="1.3" height="26" fill="#cdcdcd"/><rect x="1062.2" y="158" width="1" height="26" fill="#f7f7f7"/><path d="M1078,163.8 C1070,164.3 1069.5,172.3 1076,174.8" fill="none" stroke="#0c0c38" stroke-width="2.6"/><polygon points="1074.5,170.8 1080.3,175.3 1075.2,179.5" fill="#0c0c38"/><polygon points="1081.8,166.3 1086.7,166.3 1086.7,179.70000000000002 1084.25,177.70000000000002 1081.8,179.70000000000002" fill="url(#bmg)"/><path d="M1107,179.5 C1099,178.0 1098.5,171.0 1105.5,168.5" fill="none" stroke="#0c0c38" stroke-width="2.6"/><polygon points="1104.4,163.7 1109.5,168.5 1104.2,172.8" fill="#0c0c38"/><polygon points="1110.4,162.5 1115.8000000000002,162.5 1115.8000000000002,175.9 1113.1000000000001,173.9 1110.4,175.9" fill="url(#bmg)"/><rect x="1125.2" y="158" width="1.3" height="26" fill="#cdcdcd"/><rect x="1126.5" y="158" width="1" height="26" fill="#f7f7f7"/><circle cx="1140.2" cy="175.5" r="5.6" fill="#bdbdbd"/><path d="M1140.2,169.9 A5.6,5.6 0 0 0 1140.2,181.1 Z" fill="#747474"/><rect x="1140" y="170" width="1.4" height="11" fill="#dcdcdc"/><line x1="1147.6" y1="169.6" x2="1152.4" y2="174" stroke="#6a6a6a" stroke-width="2.9"/><circle cx="1144.8" cy="166.5" r="3.5" fill="#f6f6f6" stroke="#505050" stroke-width="1.6"/><g fill="#f4f4f4" stroke="#353535" stroke-width="1.7"><rect x="1164.2" y="164.4" width="5.4" height="4.4" rx="1.6"/><rect x="1172.6" y="164.4" width="6" height="4.4" rx="1.6"/></g><path d="M1169.6,165.4 L1172.6,165.4 M1178.6,165.2 Q1182.6,165 1182.8,168.5" fill="none" stroke="#353535" stroke-width="1.6"/><polygon points="1173.5,173.5 1173.5,178.2 1177.8,175.8" fill="#9a9a9a"/><rect x="1189.2" y="158" width="1.3" height="26" fill="#cdcdcd"/><rect x="1190.5" y="158" width="1" height="26" fill="#f7f7f7"/><rect x="1199" y="162.9" width="10.3" height="16.8" rx="2.8" fill="url(#cyl2)"/><ellipse cx="1204.2" cy="165.6" rx="3.6" ry="1.7" fill="#f2f2f2"/><rect x="1200.5" y="169.1" width="7.3" height="1" fill="#f4f4f4"/><rect x="1211.8" y="172.6" width="4.4" height="6.6" rx="1.4" fill="#cfcfcf" stroke="#404040" stroke-width="1.1"/><ellipse cx="1214" cy="174.4" rx="1.4" ry="0.8" fill="#fff"/><rect x="1212.4" y="176.4" width="3.2" height="1.5" fill="#777"/></svg>
<svg class="abs" style="left:0;top:0" width="1700" height="930"><rect x="1092" y="209.5" width="28" height="7" fill="#e6e6e6" stroke="#a8a8a8" stroke-width="0.8"/><polygon points="1103.5,214.5 1109.5,214.5 1106.5,211.5" fill="#9a9a9a"/><rect x="1121" y="209.5" width="12" height="7" fill="#dcdcdc"/><rect x="1133.5" y="209.5" width="28.5" height="7" fill="#c8c8c8" stroke="#a0a0a0" stroke-width="0.8"/><polygon points="1144.5,211.5 1152.5,211.5 1148.5,215.5" fill="#000"/></svg>
<svg class="abs" style="left:0;top:0" width="1700" height="930"><line x1="493" y1="278.3" x2="510" y2="278.3" stroke="#9a9a9a" stroke-width="0.9" stroke-dasharray="2,1.4"/></svg>
<svg class="abs" style="left:0;top:0" width="1700" height="930"><polygon points="341,743 345,736 353,734 353,792 349,786 343,760" fill="#f1f3f7"/></svg>
</body></html>
